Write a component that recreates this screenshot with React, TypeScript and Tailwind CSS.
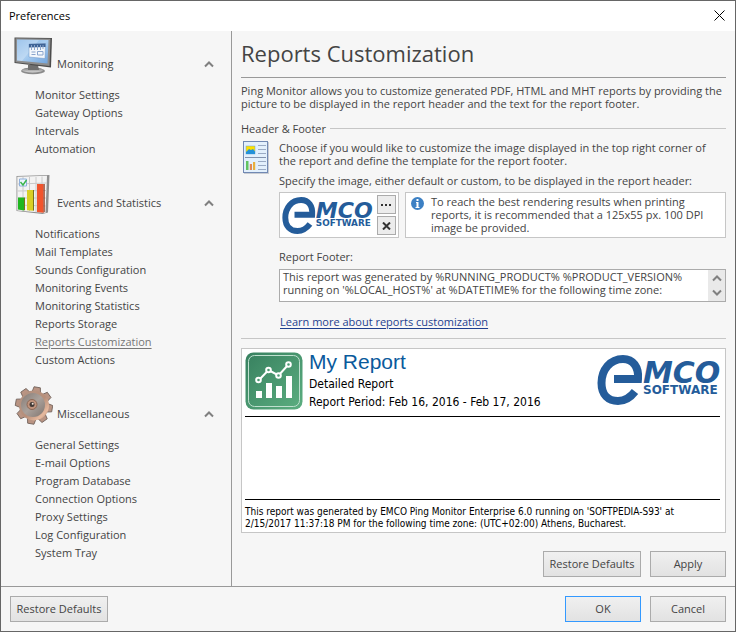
import React, { useState } from "react";

type Section = { title: string; icon: React.ReactNode; items: string[] };

const MonitorIcon = () => (
  <svg viewBox="0 0 40 40" className="h-10 w-10" aria-hidden="true">
    <defs>
      <linearGradient id="screen" x1="0" y1="0" x2="1" y2="1">
        <stop offset="0" stopColor="#7fb2e6" />
        <stop offset="0.5" stopColor="#a9cdf0" />
        <stop offset="1" stopColor="#6fa3dc" />
      </linearGradient>
      <linearGradient id="stand" x1="0" y1="0" x2="0" y2="1">
        <stop offset="0" stopColor="#777" />
        <stop offset="1" stopColor="#d8d8d8" />
      </linearGradient>
    </defs>
    <ellipse cx="20" cy="35" rx="12" ry="3.200" fill="#8b8b8b" />
    <ellipse cx="19.500" cy="34" rx="10.500" ry="2.400" fill="url(#stand)" />
    <path d="M15 29h10l1 5H15z" fill="#6f6f6f" />
    <path d="M1.500 1.500 39 2 38 31.500 1.500 27z" fill="#4c4c4c" />
    <path d="M2.500 2.300 37.500 2.800 36.500 30 2.500 26.200z" fill="#8d8d8d" />
    <path d="M4 3.500 35.500 4 34.500 27.500 4 24.500z" fill="url(#screen)" />
    <path d="M4 3.500 26 4 9 24.900 4 24.500z" fill="#fff" opacity="0.25" />
    <path d="M16 8 32.500 7.500 32 22.500 16 21z" fill="#f4f8fc" stroke="#6f94c4" strokeWidth="0.500" />
    <path d="M16 8 32.500 7.500v3.500l-16.500.5z" fill="#3d6396" />
    <path d="M18.500 9v5M21.500 9v5M24.500 9v5M27.500 9v5M30 9v4" stroke="#8aa5cc" strokeWidth="1" />
    <path d="M18.500 16h4M18.500 18.500h4M24.500 15.500h5.500v3.500h-5.500z" fill="none" stroke="#8aa5cc" strokeWidth="1" />
  </svg>
);

const ChartIcon = () => (
  <svg viewBox="0 0 40 40" className="h-10 w-10" aria-hidden="true">
    <path d="M3.500 1 36.500 0 35 37.500 29.500 39 3.500 36z" fill="#8f8f8f" />
    <path d="M4.300 1.700 34 .7 32.500 38 4.300 35.500z" fill="#f3f3f3" />
    <path d="M4.500 9 33.500 8M4.500 16l29-.5M4.500 23h28.500M4.500 30l28.500 1M10 2v34M16.500 2v35M23 2v35M29 1.500V37" stroke="#cacaca" strokeWidth="1" />
    <path d="M6.500 4h7v7h-7z" fill="#edf4ff" stroke="#8fb0dc" />
    <path d="m7.500 7 2.500 3 3.500-5" fill="none" stroke="#39b54a" strokeWidth="1.400" />
    <path d="M5 22.500h6v13L5 34.500z" fill="#20b720" />
    <path d="M14 15h6v20.800l-6-.6z" fill="#d9cf25" />
    <path d="M20 15h1v20.500l-1 .2zM11 22.500h1v12.600l-1 .3z" fill="#77721a" />
    <path d="M24 9h6.500v28.800l-6.500-.7z" fill="#f1542d" />
    <path d="M30.500 9h1.200v28l-1.200.7z" fill="#8e3318" />
  </svg>
);

const gearTeeth = [0, 45, 90, 135, 180, 225, 270, 315];

const GearIcon = () => (
  <svg viewBox="0 0 40 40" className="h-10 w-10" aria-hidden="true">
    <defs>
      <linearGradient id="copper" x1="0" y1="0" x2="1" y2="1">
        <stop offset="0" stopColor="#b39484" />
        <stop offset="0.55" stopColor="#b78f7a" />
        <stop offset="0.8" stopColor="#e6b99e" />
        <stop offset="1" stopColor="#a37b67" />
      </linearGradient>
      <linearGradient id="disc" x1="0" y1="0" x2="1" y2="1">
        <stop offset="0" stopColor="#857b75" />
        <stop offset="0.5" stopColor="#aaa19b" />
        <stop offset="1" stopColor="#80756f" />
      </linearGradient>
    </defs>
    <g transform="translate(21 19.500) rotate(10)">
      <g fill="#b99483" stroke="#6d5f58" strokeWidth="0.800">
        {gearTeeth.map((a) => (
          <path key={a} d="M-4.500-12-3.200-18.500H3.200L4.500-12z" transform={`rotate(${a})`} />
        ))}
      </g>
    </g>
    <circle cx="21" cy="19.500" r="15" fill="url(#copper)" />
    <circle cx="20" cy="19" r="12" fill="url(#disc)" />
    <circle cx="19" cy="18.500" r="5" fill="#c0937c" stroke="#8e6855" />
    <circle cx="19" cy="18.500" r="2.500" fill="#433a36" />
    <circle cx="19.700" cy="17.800" r="1" fill="#f4e6dc" />
  </svg>
);

const sections: Section[] = [
  {
    title: "Monitoring",
    icon: <MonitorIcon />,
    items: ["Monitor Settings", "Gateway Options", "Intervals", "Automation"],
  },
  {
    title: "Events and Statistics",
    icon: <ChartIcon />,
    items: [
      "Notifications",
      "Mail Templates",
      "Sounds Configuration",
      "Monitoring Events",
      "Monitoring Statistics",
      "Reports Storage",
      "Reports Customization",
      "Custom Actions",
    ],
  },
  {
    title: "Miscellaneous",
    icon: <GearIcon />,
    items: [
      "General Settings",
      "E-mail Options",
      "Program Database",
      "Connection Options",
      "Proxy Settings",
      "Log Configuration",
      "System Tray",
    ],
  },
];

const Chevron = ({ down = false }: { down?: boolean }) => (
  <svg viewBox="0 0 10 8" className="h-2 w-2.5" aria-hidden="true">
    <path d={down ? "M1 1.500 5 5.500 9 1.500" : "M1 6.500 5 2.500 9 6.500"} fill="none" stroke="#808080" strokeWidth="2" />
  </svg>
);

const EmcoLogo = ({ className }: { className: string }) => (
  <svg viewBox="0 0 125 50" className={className} role="img" aria-label="EMCO Software">
    <path
      d="M17 24H41C42 12 36 4 26 4 13 4 4.500 15 4.500 28c0 12 7 18 16.500 18 7 0 12-3 17-9.500"
      fill="none"
      stroke="#245c9a"
      strokeWidth="8"
    />
    <text x="46" y="28" fontSize="30" fill="#245c9a" className="font-['DejaVu_Sans',sans-serif] font-bold italic">MCO</text>
    <text x="46" y="39" fontSize="12" fill="#245c9a" className="font-['DejaVu_Sans',sans-serif] font-bold">SOFTWARE</text>
  </svg>
);

const ReportPageIcon = () => (
  <svg viewBox="0 0 28 34" className="h-[34px] w-7" aria-hidden="true">
    <rect x="3" y="2" width="25" height="32" fill="#c9ccd2" />
    <rect x="2.500" y="1.500" width="24" height="31" fill="#e3f0fc" stroke="#7189b3" />
    <rect x="5" y="6" width="9" height="8" fill="#ffe000" stroke="#6aa2d8" strokeWidth="0.500" />
    <path d="M5 14v-2l3-3 2 1 2-1 2 2.500V14z" fill="#2592d8" />
    <path d="M17 5.500h8M17 9.500h8M17 13.500h8M17 21.500h8M17 25.500h8M17 29.500h8" stroke="#9aabc4" />
    <path d="M4 17.500h21" stroke="#8292ad" />
    <path d="M5 21h2.500v9H5z" fill="#62c462" />
    <path d="M8.800 24h2.200v6H8.800z" fill="#e08a55" />
    <path d="M12 22h2.200v8H12z" fill="#e8b03c" />
  </svg>
);

const ReportBadge = () => (
  <svg viewBox="0 0 58 58" className="h-[58px] w-[58px] shrink-0" aria-hidden="true">
    <defs>
      <linearGradient id="badge" x1="0" y1="0" x2="1" y2="1">
        <stop offset="0" stopColor="#37805f" />
        <stop offset="1" stopColor="#5cae80" />
      </linearGradient>
    </defs>
    <rect x="0.500" y="0.500" width="57" height="57" rx="8" fill="url(#badge)" />
    <rect x="3.500" y="3.500" width="51" height="51" rx="6" fill="none" stroke="#bfe0cf" />
    <path d="M11 39h6v7h-6zM21 31h6v15h-6zM31 34h6v12h-6zM41 24h6v22h-6z" fill="#fff" />
    <path d="M14 28 23.500 18 33.500 23.500 43 13" fill="none" stroke="#fff" strokeWidth="2" />
    <g fill="#4b9873" stroke="#fff" strokeWidth="2">
      <circle cx="13.500" cy="28" r="2.300" />
      <circle cx="23.500" cy="18" r="2.300" />
      <circle cx="33.500" cy="23.500" r="2.300" />
      <circle cx="43.500" cy="12.500" r="2.300" />
    </g>
  </svg>
);

const Button = ({ children, wide = false, primary = false }: { children: string; wide?: boolean; primary?: boolean }) => (
  <button
    type="button"
    className={`h-[26px] border bg-linear-to-b from-[#f0f0f0] to-[#e2e2e2] pb-0.5 ${wide ? "w-[98px]" : "w-[76px]"} ${
      primary ? "border-[#3399ff]" : "border-[#ababab]"
    }`}
  >
    {children}
  </button>
);

export default function App() {
  const [active, setActive] = useState("Reports Customization");
  const [collapsed, setCollapsed] = useState<string[]>([]);
  const toggle = (title: string) =>
    setCollapsed((c) => (c.includes(title) ? c.filter((t) => t !== title) : [...c, title]));

  return (
    <div className="flex min-h-screen flex-col border border-[#666] bg-[#f6f6f6] font-['Open_Sans','Noto_Sans',sans-serif] text-[11px] leading-[13px] text-[#444]">
      <header className="flex h-[30px] items-center justify-between bg-white pr-2.5 pb-0.5 pl-2 text-black">
        <span>Preferences</span>
        <button type="button" aria-label="Close">
          <svg viewBox="0 0 11 11" className="h-[11px] w-[11px]" aria-hidden="true">
            <path d="m.5.5 10 10m0-10-10 10" stroke="#000" />
          </svg>
        </button>
      </header>

      <div className="flex flex-1">
        <nav className="flex w-[231px] shrink-0 flex-col gap-[17px] border-r border-[#999] pt-[5px]">
          {sections.map((s) => (
            <section key={s.title}>
              <button
                type="button"
                onClick={() => toggle(s.title)}
                className="mb-2.5 flex h-10 w-full items-end gap-1 pr-[17px] pl-3 text-left leading-6"
              >
                {s.icon}
                <span className="flex-1">{s.title}</span>
                <span className="flex h-6 items-center">
                  <Chevron down={collapsed.includes(s.title)} />
                </span>
              </button>
              {!collapsed.includes(s.title) && (
                <ul className="pl-[34px] leading-[18px]">
                  {s.items.map((item) => (
                    <li key={item}>
                      <a
                        href="#"
                        onClick={() => setActive(item)}
                        className={item === active ? "text-[#777] underline underline-offset-2" : ""}
                      >
                        {item}
                      </a>
                    </li>
                  ))}
                </ul>
              )}
            </section>
          ))}
        </nav>

        <main className="flex min-w-0 flex-1 flex-col px-[9px] pb-[9px]">
          <h1 className="border-b border-[#999] pt-1.5 pb-2 text-[22px] leading-8">Reports Customization</h1>
          <p className="mt-1.5">
            Ping Monitor allows you to customize generated PDF, HTML and MHT reports by providing the picture to be
            displayed in the report header and the text for the report footer.
          </p>

          <h2 className="mt-3 flex items-center gap-1">
            Header &amp; Footer
            <span className="h-px flex-1 bg-[#c6c6c6]" />
          </h2>
          <div className="mt-[5px] flex gap-2.5">
            <ReportPageIcon />
            <div className="min-w-0 flex-1">
              <p className="mt-px pr-3">
                Choose if you would like to customize the image displayed in the top right corner of the report and
                define the template for the report footer.
              </p>
              <p className="mt-[7px]">Specify the image, either default or custom, to be displayed in the report header:</p>
              <div className="mt-[5px] flex gap-1.5">
                <div className="flex h-[46px] w-[120px] items-center justify-between border border-[#c6c6c6] bg-white px-0.5">
                  <EmcoLogo className="h-[37px] w-[92px]" />
                  <div className="flex flex-col gap-0.5">
                    <button type="button" aria-label="Browse" className="flex h-[19px] w-[19px] items-center justify-center border border-[#ababab] bg-[#ececec]">
                      <svg viewBox="0 0 11 2" className="h-0.5 w-[11px]" aria-hidden="true">
                        <path d="M0 0h2v2H0zM4 0h2v2H4zM8 0h2v2H8z" fill="#333" />
                      </svg>
                    </button>
                    <button type="button" aria-label="Clear" className="flex h-[19px] w-[19px] items-center justify-center border border-[#ababab] bg-[#ececec]">
                      <svg viewBox="0 0 9 8" className="h-2 w-[9px]" aria-hidden="true">
                        <path d="m1 .5 7 7m0-7-7 7" stroke="#333" strokeWidth="2" />
                      </svg>
                    </button>
                  </div>
                </div>
                <div className="flex flex-1 gap-[7px] border border-[#c6c6c6] bg-white pt-0.5 pl-[5px]">
                  <svg viewBox="0 0 13 13" className="mt-0.5 h-[13px] w-[13px] shrink-0" aria-hidden="true">
                    <circle cx="6.500" cy="6.500" r="6.500" fill="#3c80c4" />
                    <path d="M5.500 2h2v2h-2zM5 5h2.500v5h1v1H4.500v-1h1V6H5z" fill="#fff" />
                  </svg>
                  <p>
                    To reach the best rendering results when printing reports, it is recommended that a 125x55 px. 100
                    DPI image be provided.
                  </p>
                </div>
              </div>
              <label htmlFor="footer" className="mt-3 block">Report Footer:</label>
              <div className="mt-1.5 flex border border-[#ababab] bg-white">
                <textarea
                  id="footer"
                  rows={2}
                  className="h-[31px] min-w-0 flex-1 resize-none overflow-hidden pl-[3px]"
                  defaultValue="This report was generated by %RUNNING_PRODUCT% %PRODUCT_VERSION% running on '%LOCAL_HOST%' at %DATETIME% for the following time zone:"
                />
                <div className="flex w-[17px] flex-col items-center justify-around bg-[#e9e9e9]">
                  <button type="button" aria-label="Scroll up"><Chevron /></button>
                  <button type="button" aria-label="Scroll down"><Chevron down /></button>
                </div>
              </div>
              <a href="#" className="mt-[13px] ml-px inline-block text-[#1e3f8f] underline underline-offset-2">
                Learn more about reports customization
              </a>
            </div>
          </div>

          <article className="mt-2.5 border-t border-[#c6c6c6] pt-[9px] text-black">
            <div className="flex h-[185px] flex-col border border-[#c6c6c6] bg-white pr-[5px] pb-0.5 pl-[3px]">
              <div className="flex gap-1.5 border-b border-black pt-[3px] pb-[5px]">
                <ReportBadge />
                <div className="flex-1 font-['DejaVu_Sans_Condensed','DejaVu_Sans',sans-serif] text-xs leading-[18px]">
                  <h3 className="mb-[3px] font-['Liberation_Sans',Arial,sans-serif] text-[21px] leading-5 text-[#0a5a9c]">My Report</h3>
                  <p>Detailed Report</p>
                  <p>Report Period: Feb 16, 2016 - Feb 17, 2016</p>
                </div>
                <EmcoLogo className="mt-[3px] -mr-0.5 h-[50px] w-[125px]" />
              </div>
              <p className="mt-auto border-t border-black pt-1.5 font-['DejaVu_Sans_Condensed','DejaVu_Sans',sans-serif] text-[10px] leading-3">
                This report was generated by EMCO Ping Monitor Enterprise 6.0 running on 'SOFTPEDIA-S93' at
                <br />
                2/15/2017 11:37:18 PM for the following time zone: (UTC+02:00) Athens, Bucharest.
              </p>
            </div>
          </article>
          <div className="mt-auto flex justify-end gap-[9px]">
            <Button wide>Restore Defaults</Button>
            <Button>Apply</Button>
          </div>
        </main>
      </div>

      <footer className="flex h-[45px] items-center gap-[9px] border-t border-[#999] px-[9px]">
        <Button wide>Restore Defaults</Button>
        <span className="flex-1" />
        <Button primary>OK</Button>
        <Button>Cancel</Button>
      </footer>
    </div>
  );
}
